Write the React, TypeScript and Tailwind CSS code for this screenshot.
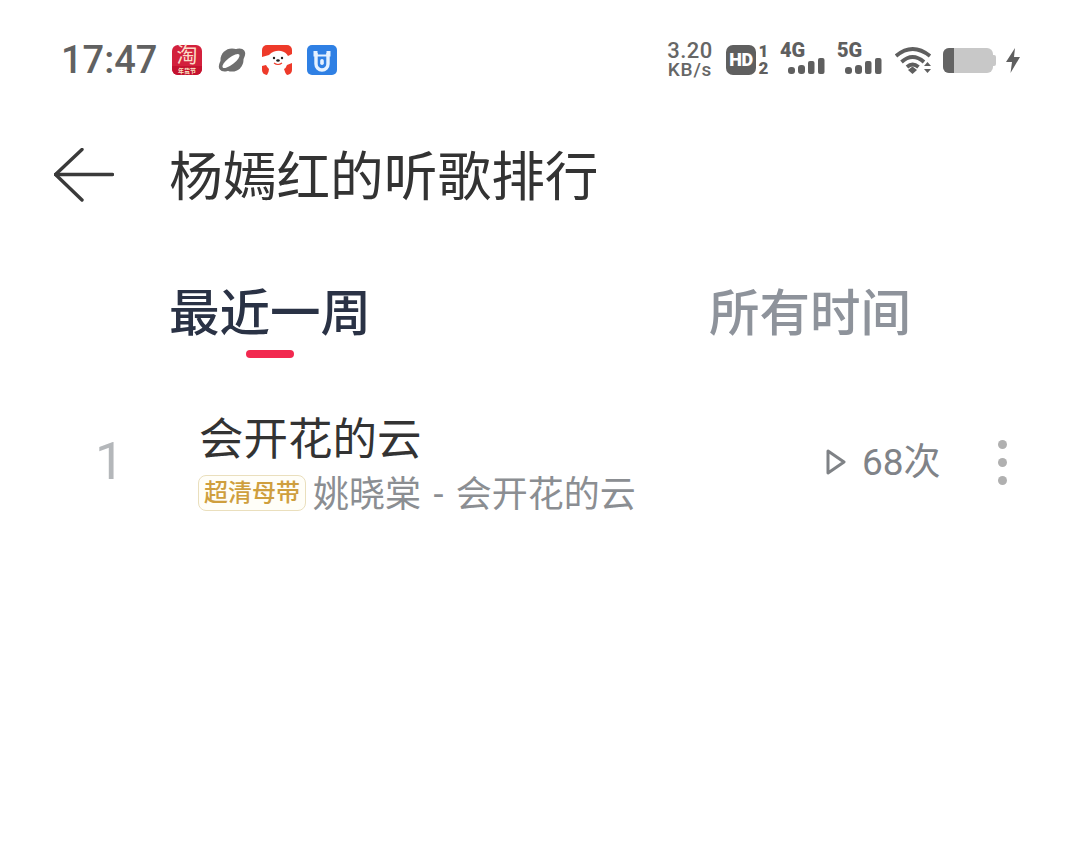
import React from "react";

const CJK = "font-['Roboto','Noto_Sans_CJK_SC',sans-serif]";

function Signal({ label }: { label: string }) {
  return (
    <div className="relative h-[34px] w-[46px]">
      <span className="absolute left-0 top-[-4px] font-['Roboto',sans-serif] text-[20px] leading-[23px] font-black text-[#5f5f5f]">{label}</span>
      <svg className="absolute left-[8px] top-[15px]" width="38" height="17" viewBox="0 0 38 17" fill="#5f5f5f">
        <rect x="0" y="9" width="7" height="7" rx="3" />
        <rect x="10" y="7" width="7" height="9" rx="3" />
        <rect x="20" y="3" width="6.5" height="13" rx="2" />
        <rect x="30" y="0" width="6.5" height="16" rx="2" />
      </svg>
    </div>
  );
}

export default function App() {
  return (
    <div className={`flex h-[859px] w-[1080px] flex-col overflow-hidden bg-white ${CJK}`}>
      {/* status bar */}
      <div className="flex h-[120px] items-center justify-between pl-[61px] pr-[60px]">
        <div className="flex items-center">
          <span className="w-[111px] font-['Roboto',sans-serif] text-[38px] font-medium leading-none text-[#616161]">17:47</span>
          <div className="flex h-[30px] w-[30px] flex-col items-center rounded-[6px] bg-[#d3203c]">
            <span className="text-[21px] font-normal leading-[21px] text-[#fbdcc8]">淘</span>
            <span className="w-full rounded-b-[6px] bg-[#c4122f] text-center text-[6px] font-bold leading-[9px] text-[#fbe8c8]">年货节</span>
          </div>
          <svg className="ml-[15px]" width="30" height="30" viewBox="0 0 30 30">
            <ellipse cx="15" cy="15" rx="15.5" ry="8" transform="rotate(-38 15 15)" fill="#6e6e6e" />
            <circle cx="15" cy="15" r="11.5" fill="#6e6e6e" />
            <ellipse cx="14" cy="16" rx="10.5" ry="3.6" transform="rotate(-38 14 16)" fill="#fff" />
          </svg>
          <svg className="ml-[15px]" width="30" height="30" viewBox="0 0 30 30">
            <rect width="30" height="30" rx="5" fill="#ee3a2a" />
            <path d="M0 12 L7 10 Q12 5 19 6 Q24 7 26 11 L30 9 V18 L25 20 Q24 23 22 24 Q23 28 25 30 H5 Q7 27 7 24 Q5 22 4 20 L0 21Z" fill="#fff" />
            <circle cx="12" cy="13" r="1.2" fill="#222" />
            <circle cx="20" cy="13" r="1.2" fill="#222" />
            <ellipse cx="16" cy="15.5" rx="1.8" ry="1.3" fill="#222" />
            <path d="M12 18 Q16 21 20 18" stroke="#ee3a2a" strokeWidth="1.2" fill="none" />
          </svg>
          <svg className="ml-[15px]" width="30" height="30" viewBox="0 0 30 30">
            <rect width="30" height="30" rx="5" fill="#2f80e4" />
            <path d="M9 8 V19 A6 6 0 0 0 21 19 V8" fill="none" stroke="#e6f2ff" strokeWidth="3.4" />
            <path d="M6.5 6 H10.5 V9.5 H19.5 V6 H23.5 V11.5 H6.5Z" fill="#e6f2ff" />
            <rect x="13.2" y="14" width="3.6" height="6" rx="1.8" fill="#e6f2ff" />
          </svg>
        </div>
        <div className="flex items-center">
          <div className="flex w-[46px] flex-col items-center font-['Roboto',sans-serif] text-[#666]">
            <span className="text-[22px] font-medium leading-[20px] tracking-[0.5px]">3.20</span>
            <span className="text-[19px] font-medium leading-[18px] tracking-[0.8px]">KB/s</span>
          </div>
          <div className="ml-[13px] flex h-[30px] w-[30px] items-center justify-center rounded-[7px] bg-[#5f5f5f] font-['Roboto',sans-serif] text-[18px] font-black leading-none tracking-[-0.5px] text-white">HD</div>
          <div className="ml-[1px] flex w-[13px] flex-col items-center font-['Roboto',sans-serif] text-[17px] font-black leading-[17px] text-[#5f5f5f]">
            <span>1</span>
            <span>2</span>
          </div>
          <div className="ml-[10px]"><Signal label="4G" /></div>
          <div className="ml-[11px]"><Signal label="5G" /></div>
          <svg className="ml-[12px]" width="38" height="30" viewBox="0 0 38 30" fill="none" stroke="#5f5f5f" strokeWidth="3.8">
            <path d="M1 11 Q17.5 -3 35 11" />
            <path d="M6.5 17 Q17.5 7 29 17" />
            <path d="M12 22 Q17.5 17 23.5 22" />
            <path d="M13 25 L17.5 21.5 L22 25 L17.5 29Z" fill="#5f5f5f" stroke="none" />
            <path d="M29 21 L32.5 17 L36 21Z M29 24 L32.5 28 L36 24Z" fill="#5f5f5f" stroke="none" />
          </svg>
          <div className="ml-[10px] flex h-[25px] items-center">
            <div className="flex h-[25px] w-[50px] overflow-hidden rounded-[6px] bg-[#c8c8c8]">
              <div className="h-full w-[11px] bg-[#646464]" />
            </div>
            <div className="h-[11px] w-[3px] rounded-r-[2px] bg-[#c8c8c8]" />
          </div>
          <svg className="ml-[10px]" width="14" height="25" viewBox="0 0 14 25" fill="#5f5f5f">
            <path d="M9 0 L0 14 H6 L4.5 25 L14 9 H8Z" />
          </svg>
        </div>
      </div>

      {/* header */}
      <div className="flex h-[115px] items-center pl-[54px]">
        <svg className="mb-[6px]" width="60" height="54" viewBox="0 0 60 54" fill="none" stroke="#3a3a3a" strokeWidth="3.4" strokeLinecap="round" strokeLinejoin="round">
          <path d="M28 1.5 L1.5 26.5 L28 52" />
          <path d="M1.5 26.5 H58.5" />
        </svg>
        <h1 className="ml-[55px] text-[53.7px] font-normal leading-none text-[#333333]">杨嫣红的听歌排行</h1>
      </div>

      {/* tabs */}
      <div className="grid grid-cols-2">
        <div className="flex flex-col items-center pt-[49px]">
          <span className="text-[50.5px] font-medium leading-[60px] text-[#2a3245]">最近一周</span>
          <div className="mt-[6px] h-[8px] w-[48px] rounded-full bg-[#f2294f]" />
        </div>
        <div className="flex flex-col items-center pt-[49px]">
          <span className="text-[50.5px] font-medium leading-[60px] text-[#8e939b]">所有时间</span>
        </div>
      </div>

      {/* row */}
      <div className="mt-[55px] flex items-center pr-[73px]">
        <span className="w-[198px] pl-[95px] font-['Roboto',sans-serif] text-[52px] font-normal leading-none text-[#b4b7ba]">1</span>
        <div className="flex flex-1 flex-col">
          <span className="ml-[1px] text-[44.5px] leading-[54px] text-[#333333]">会开花的云</span>
          <div className="mt-[8px] flex h-[36px] items-center">
            <span className="flex h-[36px] w-[108px] items-center justify-center rounded-[8px] border border-[#eadfbd] bg-[#fffef8] text-[24px] font-medium leading-none text-[#cf9f3e]">超清母带</span>
            <span className="ml-[7px] pt-[4px] text-[36px] leading-[40px] text-[#8b8e92] [word-spacing:3.5px]">姚晓棠 - 会开花的云</span>
          </div>
        </div>
        <svg width="20" height="26" viewBox="0 0 20 26" fill="none" stroke="#7f8286" strokeWidth="3" strokeLinejoin="round">
          <path d="M2 2 L18 13 L2 24Z" />
        </svg>
        <span className="ml-[16px] w-[80px] text-[37px] leading-none text-[#808388]">68次</span>
        <div className="ml-[56px] flex flex-col gap-[9px]">
          <div className="h-[9px] w-[9px] rounded-full bg-[#b0b0b0]" />
          <div className="h-[9px] w-[9px] rounded-full bg-[#b0b0b0]" />
          <div className="h-[9px] w-[9px] rounded-full bg-[#b0b0b0]" />
        </div>
      </div>
    </div>
  );
}
